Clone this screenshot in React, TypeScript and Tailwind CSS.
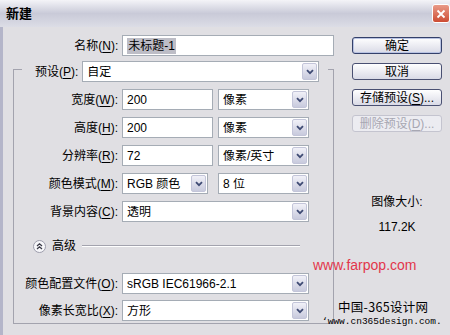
import React from "react";

const BG = "bg-[#e0dfe3]";

function Chevron() {
  return (
    <svg width="8" height="6" viewBox="0 0 8 6">
      <path d="M1 1.2 L4 4.2 L7 1.2" fill="none" stroke="#3f4b74" strokeWidth="1.8" />
    </svg>
  );
}

function Box({ className, children }: { className: string; children?: React.ReactNode }) {
  return (
    <div className={`h-[21px] border border-[#a5acb5] bg-white flex items-center pl-[4px] text-[12px] text-black ${className}`}>
      {children}
    </div>
  );
}

function Select({ className, children }: { className: string; children?: React.ReactNode }) {
  return (
    <Box className={className}>
      <span className="flex-1 whitespace-nowrap overflow-hidden">{children}</span>
      <div className="mr-[1px] h-[17px] w-[15px] rounded-[2px] border border-[#c3c5d9] bg-gradient-to-b from-[#f1f1f8] to-[#c8cadd] flex items-center justify-center">
        <Chevron />
      </div>
    </Box>
  );
}

function Label({ children, className }: { children: React.ReactNode; className: string }) {
  return <div className={`text-right text-[12px] text-black whitespace-nowrap ${className}`}>{children}</div>;
}

function U({ children }: { children: React.ReactNode }) {
  return <span className="underline underline-offset-2">{children}</span>;
}

function Btn({ children, primary, disabled }: { children: React.ReactNode; primary?: boolean; disabled?: boolean }) {
  return (
    <div
      className={`h-[17px] w-[90px] rounded-[3px] border flex items-center justify-center text-[12px] ${
        disabled
          ? "border-[#c4c4cf] text-[#a7a7b2] bg-[#ececf1]"
          : primary
          ? "border-[#34406a] text-black bg-gradient-to-b from-[#ffffff] to-[#d9dae6] shadow-[inset_0_0_0_1px_#b9c3e2]"
          : "border-[#4a5072] text-black bg-gradient-to-b from-[#ffffff] to-[#d9dae6]"
      }`}
    >
      {children}
    </div>
  );
}

export default function App() {
  return (
    <div className={`relative w-[450px] h-[335px] overflow-hidden ${BG} font-['Liberation_Sans','Noto_Sans_CJK_SC',sans-serif] leading-none`}>
      {/* title bar */}
      <div className="h-[27px] flex items-center justify-between pl-[6px] pr-0 bg-gradient-to-b from-[#f4f4f8] via-[#c9cad8] to-[#dcdde6]">
        <span className="text-[13px] font-bold text-black">新建</span>
        <div className="h-[19px] w-[18px] rounded-[3px] border border-[#ffffff] bg-gradient-to-b from-[#e99a88] to-[#cc4b32] flex items-center justify-center">
          <svg width="10" height="10" viewBox="0 0 10 10">
            <path d="M1.5 1.5 L8.5 8.5 M8.5 1.5 L1.5 8.5" stroke="#ffffff" strokeWidth="1.8" />
          </svg>
        </div>
      </div>

      <div className="flex border-l-[3px] border-[#b4b5c9] h-[308px]">
        {/* left column */}
        <div className="w-[331px] flex flex-col">
          <div className="mt-[8px] flex items-center">
            <Label className="w-[116px]">
              名称(<U>N</U>):
            </Label>
            <Box className="ml-[4px] w-[213px]">
              <span className="bg-[#bdbdc6] px-[1px] py-[2px]">未标题-1</span>
            </Box>
          </div>

          {/* preset group */}
          <div className="mt-[13px] ml-[10px] w-[321px] border border-[#a3a3ae] pb-[2px] flex flex-col">
            <div className={`-mt-[9px] ml-[8px] w-[306px] flex items-center ${BG}`}>
              <Label className="pl-[13px]">
                预设(<U>P</U>):
              </Label>
              <Select className="ml-[4px] w-[237px]">自定</Select>
            </div>

            <div className="mt-[7px] flex items-center">
              <Label className="w-[104px]">
                宽度(<U>W</U>):
              </Label>
              <Box className="ml-[4px] w-[91px]">200</Box>
              <Select className="ml-[5px] w-[91px]">像素</Select>
            </div>
            <div className="mt-[7px] flex items-center">
              <Label className="w-[104px]">
                高度(<U>H</U>):
              </Label>
              <Box className="ml-[4px] w-[91px]">200</Box>
              <Select className="ml-[5px] w-[91px]">像素</Select>
            </div>
            <div className="mt-[7px] flex items-center">
              <Label className="w-[104px]">
                分辨率(<U>R</U>):
              </Label>
              <Box className="ml-[4px] w-[91px]">72</Box>
              <Select className="ml-[5px] w-[91px]">像素/英寸</Select>
            </div>
            <div className="mt-[7px] flex items-center">
              <Label className="w-[104px]">
                颜色模式(<U>M</U>):
              </Label>
              <Select className="ml-[4px] w-[86px]">RGB 颜色</Select>
              <Select className="ml-[10px] w-[91px]">8 位</Select>
            </div>
            <div className="mt-[7px] flex items-center">
              <Label className="w-[104px]">
                背景内容(<U>C</U>):
              </Label>
              <Select className="ml-[4px] w-[187px]">透明</Select>
            </div>

            {/* advanced */}
            <div className="mt-[17px] h-[14px] flex items-center">
              <svg className="ml-[19px]" width="13" height="13" viewBox="0 0 13 13">
                <circle cx="6.5" cy="6.5" r="6" fill="#f7f7fa" stroke="#9c9cab" />
                <path d="M4 6 L6.5 3.8 L9 6 M4 9 L6.5 6.8 L9 9" fill="none" stroke="#3a3a46" strokeWidth="1.3" />
              </svg>
              <span className="ml-[6px] text-[12px] text-black">高级</span>
              <div className="ml-[6px] mr-[33px] flex-1 h-[2px] border-t border-[#a3a3ae] border-b border-b-white" />
            </div>

            <div className="mt-[20px] flex items-center">
              <Label className="w-[104px]">
                颜色配置文件(<U>O</U>):
              </Label>
              <Select className="ml-[4px] w-[187px]">sRGB IEC61966-2.1</Select>
            </div>
            <div className="mt-[6px] flex items-center">
              <Label className="w-[104px]">
                像素长宽比(<U>X</U>):
              </Label>
              <Select className="ml-[4px] w-[187px]">方形</Select>
            </div>
          </div>
        </div>

        {/* right column */}
        <div className="flex-1 flex flex-col pl-[18px]">
          <div className="mt-[10px] flex flex-col gap-[9px]">
            <Btn primary>确定</Btn>
            <Btn>取消</Btn>
            <Btn>
              存储预设(<U>S</U>)...
            </Btn>
            <Btn disabled>
              删除预设(<U>D</U>)...
            </Btn>
          </div>
          <div className="w-[90px] mt-[63px] text-center text-[12px] leading-[14px] text-black">图像大小:</div>
          <div className="w-[90px] mt-[11px] text-center text-[12px] leading-[14px] text-black">117.2K</div>
        </div>
      </div>

      {/* watermarks over the dialog */}
      <div className="absolute left-[313px] top-[257px] text-[14px] leading-[16px] text-[#e2374b] font-['Liberation_Sans',sans-serif]">
        www.farpop.com
      </div>
      <div className="absolute left-[338px] top-[300px] text-[12.5px] leading-[14px] text-black font-['Noto_Sans_CJK_SC',sans-serif] tracking-[0.3px]">
        中国-365设计网
      </div>
      <div className="absolute left-[322px] top-[316px] text-[9.5px] leading-[11px] text-black font-['Liberation_Mono',monospace]">
        ‘www.cn365design.com.
      </div>
    </div>
  );
}
